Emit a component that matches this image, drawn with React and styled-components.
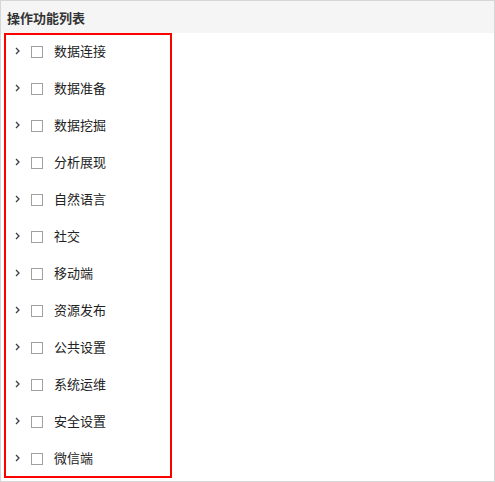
import React from "react";
import styled, { createGlobalStyle } from "styled-components";

const GlobalStyle = createGlobalStyle`
  html, body {
    margin: 0;
    padding: 0;
    background: #ffffff;
  }
  body {
    font-family: "Liberation Sans", "Noto Sans CJK SC", sans-serif;
  }
`;

const Panel = styled.div`
  width: 495px;
  height: 482px;
  box-sizing: border-box;
  border: 1px solid #d6d6d6;
  background: #ffffff;
  display: flex;
  flex-direction: column;
`;

const Header = styled.div`
  height: 32px;
  flex: none;
  background: #f5f5f5;
  display: flex;
  align-items: center;
  padding-left: 6px;
  font-size: 13px;
  font-weight: bold;
  color: #333333;
`;

const TreeBox = styled.div`
  margin-left: 3px;
  width: 168px;
  height: 445px;
  flex: none;
  box-sizing: border-box;
  border: 2px solid #ff0000;
  display: flex;
  flex-direction: column;
  justify-content: center;
`;

const Row = styled.div`
  height: 37px;
  flex: none;
  display: flex;
  align-items: center;
  padding-left: 9px;
`;

const Toggle = styled.span`
  width: 6px;
  height: 8px;
  display: flex;
  align-items: center;
  justify-content: flex-start;
  margin-top: -3px;
  flex: none;
`;

const Check = styled.span`
  width: 10px;
  height: 10px;
  border: 1px solid #a0a0a0;
  background: #ffffff;
  margin-left: 10px;
  flex: none;
`;

const Label = styled.span`
  margin-left: 11px;
  font-size: 13px;
  color: #222222;
  line-height: 16px;
`;

const Chevron = () => (
  <svg width="6" height="8" viewBox="0 0 6 8">
    <path d="M1 1 L4 4 L1 7" fill="none" stroke="#3a3f4a" strokeWidth="1.3" />
  </svg>
);

const items = [
  "数据连接",
  "数据准备",
  "数据挖掘",
  "分析展现",
  "自然语言",
  "社交",
  "移动端",
  "资源发布",
  "公共设置",
  "系统运维",
  "安全设置",
  "微信端",
];

export default function App() {
  return (
    <>
      <GlobalStyle />
      <Panel>
        <Header>操作功能列表</Header>
        <TreeBox>
          {items.map((name) => (
            <Row key={name}>
              <Toggle>
                <Chevron />
              </Toggle>
              <Check />
              <Label>{name}</Label>
            </Row>
          ))}
        </TreeBox>
      </Panel>
    </>
  );
}
